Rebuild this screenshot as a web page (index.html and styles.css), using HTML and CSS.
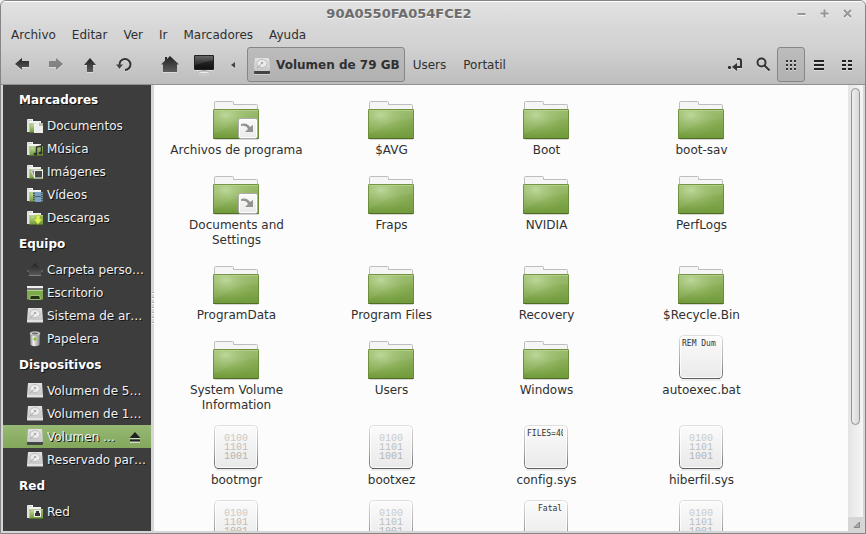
FILE: index.html
```html
<!DOCTYPE html>
<html lang="es">
<head>
<meta charset="utf-8">
<title>90A0550FA054FCE2</title>
<link rel="stylesheet" href="styles.css">
</head>
<body>
<svg class="defs" aria-hidden="true">
  <defs>
    <linearGradient id="dark" x1="0" y1="0" x2="0" y2="1"><stop offset="0" stop-color="#222"/><stop offset="1" stop-color="#5c5c5c"/></linearGradient>
    <linearGradient id="green" x1="0" y1="0" x2="0" y2="1"><stop offset="0" stop-color="#97b866"/><stop offset="1" stop-color="#709a3a"/></linearGradient>
    <radialGradient id="glow" cx=".28" cy=".2" r=".75"><stop offset="0" stop-color="#c2dba0" stop-opacity=".9"/><stop offset="1" stop-color="#8fb45c" stop-opacity="0"/></radialGradient>
    <linearGradient id="paper" x1="0" y1="0" x2="0" y2="1"><stop offset="0" stop-color="#fbfbfb"/><stop offset="1" stop-color="#e9e9e9"/></linearGradient>
    <linearGradient id="edge" x1="0" y1="0" x2="0" y2="1"><stop offset="0" stop-color="#dedede"/><stop offset=".6" stop-color="#a9a9a9"/><stop offset="1" stop-color="#666"/></linearGradient>
    <linearGradient id="metal" x1="0" y1="0" x2="0" y2="1"><stop offset="0" stop-color="#e2e2e2"/><stop offset="1" stop-color="#c4c4c4"/></linearGradient>
    <linearGradient id="bin" x1="0" y1="0" x2="1" y2="0"><stop offset="0" stop-color="#888"/><stop offset=".35" stop-color="#eee"/><stop offset="1" stop-color="#888"/></linearGradient>
    <linearGradient id="screen" x1="0" y1="0" x2="0" y2="1"><stop offset="0" stop-color="#555"/><stop offset=".5" stop-color="#222"/><stop offset="1" stop-color="#111"/></linearGradient>
  </defs>
  <symbol id="folder" viewBox="0 0 48 48">
    <path d="M3 45.5H46" stroke="#000" stroke-opacity=".15"/>
    <path d="M2.500 16V8.500Q2.500 7.500 3.500 7.500H20.500Q21.500 7.500 21.500 8.500V10.500H44.500Q45.500 10.500 45.500 11.500V16" fill="#f5f5f5" stroke="#bdbdbd"/>
    <rect x="1" y="15" width="46" height="30" rx="1" fill="url(#green)"/>
    <path d="M2 16H46V25Q22 26 9 37L2 40Z" fill="#fff" opacity=".07"/>
    <rect x="1" y="15" width="46" height="30" rx="1" fill="url(#glow)"/>
    <rect x="1.500" y="15.500" width="45" height="29" rx="1" fill="none" stroke="#638530" stroke-opacity=".75"/>
    <path d="M2 16.500H46" stroke="#bad492" stroke-opacity=".7"/>
    <path d="M1.500 44.500H46.500" stroke="#506c27"/>
  </symbol>
  <symbol id="link" viewBox="0 0 48 48">
    <use href="#folder"/>
    <rect x="26.500" y="24.500" width="19" height="20" rx="2" fill="url(#paper)" stroke="#aaa"/>
    <rect x="27.500" y="25.500" width="17" height="18" rx="1" fill="none" stroke="#fff"/>
    <path d="M29 30Q35 28 38 33L41 31V38H33L36 35Q34 31 29 32Z" fill="#929490"/>
  </symbol>
  <symbol id="sheet" viewBox="0 0 48 48">
    <path d="M4 46H44" stroke="#000" stroke-opacity=".12"/>
    <rect x="2.500" y="1.500" width="43" height="43" rx="4" fill="url(#paper)" stroke="url(#edge)"/>
    <path d="M5 44.500H43" stroke="#5e5e5e"/>
    <rect x="3.500" y="2.500" width="41" height="41" rx="3" fill="none" stroke="#fff" stroke-opacity=".8"/>
  </symbol>
  <symbol id="mini" viewBox="0 0 16 16">
    <path d="M0 14V2Q0 1 1 1H6V3H14V6H2V14Z" fill="#f2f2f2"/>
    <path d="M1 14V2.500H5" fill="none" stroke="#bbb" stroke-width=".6"/>
    <rect x="2" y="5" width="14" height="10" fill="url(#green)"/>
    <rect x="2" y="5" width="14" height="10" fill="url(#glow)"/>
    <path d="M2.500 15V5.500H16" fill="none" stroke="#bcd49c" stroke-width=".7"/>
    <path d="M2 14.500H16" stroke="#55752c"/>
  </symbol>
  <symbol id="docs" viewBox="0 0 16 16"><use href="#mini"/><path d="M7 4H12L16 8V15H7Z" fill="#eee"/><path d="M12 4V8H16Z" fill="#bbb"/></symbol>
  <symbol id="music" viewBox="0 0 16 16"><use href="#mini"/><path d="M9.500 13V6L14.500 5V12" fill="none" stroke="#333" stroke-width="1.500"/><ellipse cx="8.500" cy="13" rx="2" ry="1.600" fill="#333"/><ellipse cx="13.500" cy="12" rx="2" ry="1.600" fill="#333"/></symbol>
  <symbol id="images" viewBox="0 0 16 16"><use href="#mini"/><path d="M4.500 7L9 5V12L7 13Z" fill="#888" stroke="#ddd"/><rect x="7.500" y="6.500" width="8" height="7.500" fill="#454a45" stroke="#eee"/></symbol>
  <symbol id="videos" viewBox="0 0 16 16"><use href="#mini"/><rect x="6" y="5" width="10" height="10" fill="#4f5f6a"/><path d="M8 5H14V9H8ZM8 10H14V15H8Z" fill="#79a4c5"/><path d="M7 5V15M15 5V15" stroke="#bbb" stroke-dasharray="1 1"/></symbol>
  <symbol id="downloads" viewBox="0 0 16 16"><use href="#mini"/><path d="M9 5H13V9H15.500L11 14.500L6.500 9H9Z" fill="#dff052" stroke="#8fae25" stroke-width=".5"/></symbol>
  <symbol id="net" viewBox="0 0 16 16"><use href="#mini"/><rect x="7" y="6" width="7" height="7" fill="#eee"/><path d="M8 12V9H9V7H12V9H13V12Z" fill="#333"/></symbol>
  <symbol id="homedark" viewBox="0 0 16 16"><path d="M8 1L16 9H14V14H2V9H0Z" fill="url(#dark)"/><path d="M2 13.500H14M0 9H2M14 9H16" fill="none" stroke="#888" stroke-width=".8"/></symbol>
  <symbol id="desk" viewBox="0 0 16 16"><rect y="1" width="16" height="2" fill="#eee"/><rect y="3" width="16" height="2" fill="#777"/><path d="M0 5H16V14.500H0Z" fill="#7eaa4b"/><path d="M0 5.500H16" stroke="#b2d38c"/><path d="M2.500 14.500L3.500 10.500H12.500L13.500 14.500Z" fill="#243414" stroke="#b2d38c" stroke-width=".8"/></symbol>
  <symbol id="disk" viewBox="0 0 16 16"><path d="M1 0H15L16 12V15H0V12Z" fill="url(#metal)"/><path d="M0 12H16V14H0Z" fill="#e2e2e2"/><path d="M0 14.500H16" stroke="#8c8c8c"/><ellipse cx="8" cy="5.500" rx="5" ry="4" fill="#ececec" stroke="#b5b5b5" stroke-width=".8"/><circle cx="8" cy="5" r="1.200" fill="#aaa"/><path d="M3 10L7 6.500" stroke="#999" stroke-width=".8"/></symbol>
  <symbol id="diskmount" viewBox="0 0 16 16"><use href="#disk"/><rect y="12.500" width="16" height="3.500" rx="1" fill="#444"/><path d="M1 12.500H15" stroke="#ccc"/></symbol>
  <symbol id="trash" viewBox="0 0 16 16"><path d="M3 2H13L12.500 14Q8 16.500 3.500 14Z" fill="url(#bin)"/><ellipse cx="8" cy="2.500" rx="5" ry="2" fill="#ddd" stroke="#999" stroke-width=".7"/><ellipse cx="8" cy="2.500" rx="3.200" ry=".9" fill="#666"/><path d="M6 8.500L8 5.500L10 8.500L9 9.500H7Z" fill="#89c33b"/></symbol>
</svg>
<div class="window">
  <header class="head">
    <div class="titlebar">
      <h1>90A0550FA054FCE2</h1>
      <div class="wm">
        <button aria-label="Minimizar"><svg width="9" height="9"><path d="M0.500 5H8.500" stroke="#969696" stroke-width="2"/></svg></button>
        <button aria-label="Maximizar"><svg width="9" height="9"><path d="M.500 4.500H8.500M4.500 .500V8.500" stroke="#969696" stroke-width="2"/></svg></button>
        <button aria-label="Cerrar"><svg width="9" height="9"><path d="M1 1L8 8M8 1L1 8" stroke="#969696" stroke-width="2"/></svg></button>
      </div>
    </div>
    <nav class="menu">
      <button>Archivo</button><button>Editar</button><button>Ver</button><button>Ir</button><button>Marcadores</button><button>Ayuda</button>
    </nav>
    <div class="toolbar">
      <div class="group">
        <button class="nav" aria-label="Atrás"><svg width="16" height="14"><path d="M1 6L8 0V3H15V9H8V12Z" fill="url(#dark)"/></svg></button>
        <button class="nav dim" aria-label="Adelante"><svg width="16" height="14"><path d="M15 6L8 0V3H1V9H8V12Z" fill="#777"/></svg></button>
        <button class="nav" aria-label="Subir"><svg width="14" height="16"><path d="M7 1L13 8H10V15H4V8H1Z" fill="url(#dark)"/></svg></button>
        <button class="nav" aria-label="Recargar"><svg width="18" height="16"><path d="M4.500 8A5.500 5.500 0 1 1 10 13" fill="none" stroke="#333" stroke-width="2"/><path d="M1 7.500H8L4.500 12Z" fill="#444"/></svg></button>
      </div>
      <div class="group">
        <button class="nav" aria-label="Carpeta personal"><svg width="18" height="18"><path d="M9 0L18 8.500H16V16H2V8.500H0L4 4.500V1H6V3Z" fill="url(#dark)"/></svg></button>
        <button class="nav" aria-label="Equipo"><svg width="22" height="20"><path d="M9 14H13V17H9Z" fill="#aaa"/><ellipse cx="11" cy="17.500" rx="5.500" ry="1.500" fill="#eee" stroke="#999" stroke-width=".7"/><rect x="1" y="0" width="20" height="15" rx="1" fill="#222"/><rect x="2" y="1" width="18" height="13" fill="url(#screen)"/><path d="M2 1H20V5L2 10Z" fill="#fff" opacity=".1"/></svg></button>
        <button class="tiny" aria-label="Anterior"><svg width="4" height="6"><path d="M4 0V6L0 3Z" fill="#444"/></svg></button>
      </div>
      <div class="path">
        <button class="crumb current"><svg width="16" height="16"><use href="#diskmount"/></svg><span>Volumen de 79 GB</span></button>
        <button class="crumb">Users</button><button class="crumb">Portatil</button>
      </div>
      <div class="views">
        <button aria-label="Ubicación"><svg width="14" height="14"><path d="M9 1H11Q13 1 13 3V9H8" fill="none" stroke="#333" stroke-width="2"/><path d="M4 9L9 5V13Z" fill="#333"/><rect x="0" y="8" width="3" height="3" rx="1" fill="#333"/></svg></button>
        <button aria-label="Buscar"><svg width="16" height="16"><circle cx="6.500" cy="5.500" r="4" fill="none" stroke="#333" stroke-width="2"/><path d="M9.500 8.500L14.500 13.500" stroke="#333" stroke-width="2"/></svg></button>
        <button class="on" aria-label="Iconos"><svg width="10" height="10"><path d="M0 1H10M0 5H10M0 9H10" stroke="#333" stroke-width="2" stroke-dasharray="2"/></svg></button>
        <button aria-label="Lista"><svg width="10" height="10"><path d="M0 1H10M0 5H10M0 9H10" stroke="#222" stroke-width="2"/></svg></button>
        <button aria-label="Compacta"><svg width="10" height="10"><path d="M0 1H10M0 5H10M0 9H10" stroke="#222" stroke-width="2" stroke-dasharray="4 2"/></svg></button>
      </div>
    </div>
  </header>
  <div class="body">
    <aside class="side">
      <h2>Marcadores</h2>
      <a href="#"><svg><use href="#docs"/></svg><span>Documentos</span></a>
      <a href="#"><svg><use href="#music"/></svg><span>Música</span></a>
      <a href="#"><svg><use href="#images"/></svg><span>Imágenes</span></a>
      <a href="#"><svg><use href="#videos"/></svg><span>Vídeos</span></a>
      <a href="#"><svg><use href="#downloads"/></svg><span>Descargas</span></a>
      <h2>Equipo</h2>
      <a href="#"><svg><use href="#homedark"/></svg><span>Carpeta perso…</span></a>
      <a href="#"><svg><use href="#desk"/></svg><span>Escritorio</span></a>
      <a href="#"><svg><use href="#disk"/></svg><span>Sistema de ar…</span></a>
      <a href="#"><svg><use href="#trash"/></svg><span>Papelera</span></a>
      <h2>Dispositivos</h2>
      <a href="#"><svg><use href="#disk"/></svg><span>Volumen de 5…</span></a>
      <a href="#"><svg><use href="#disk"/></svg><span>Volumen de 1…</span></a>
      <a href="#" class="selected"><svg><use href="#diskmount"/></svg><span>Volumen …</span><svg class="eject" viewBox="0 0 12 12"><path d="M6 2L12 8H0ZM1 10H11V12H1Z" fill="#eee" opacity=".7"/><path d="M6 1L11.500 7H.500ZM1 8.500H11V10.500H1Z" fill="#222"/></svg></a>
      <a href="#"><svg><use href="#disk"/></svg><span>Reservado par…</span></a>
      <h2>Red</h2>
      <a href="#"><svg><use href="#net"/></svg><span>Red</span></a>
    </aside>
    <div class="split"><i class="dots"></i></div>
    <main class="files">
      <figure><svg><use href="#link"/></svg><figcaption>Archivos de programa</figcaption></figure>
      <figure><svg><use href="#folder"/></svg><figcaption>$AVG</figcaption></figure>
      <figure><svg><use href="#folder"/></svg><figcaption>Boot</figcaption></figure>
      <figure><svg><use href="#folder"/></svg><figcaption>boot-sav</figcaption></figure>
      <figure><svg><use href="#link"/></svg><figcaption>Documents and Settings</figcaption></figure>
      <figure><svg><use href="#folder"/></svg><figcaption>Fraps</figcaption></figure>
      <figure><svg><use href="#folder"/></svg><figcaption>NVIDIA</figcaption></figure>
      <figure><svg><use href="#folder"/></svg><figcaption>PerfLogs</figcaption></figure>
      <figure><svg><use href="#folder"/></svg><figcaption>ProgramData</figcaption></figure>
      <figure><svg><use href="#folder"/></svg><figcaption>Program Files</figcaption></figure>
      <figure><svg><use href="#folder"/></svg><figcaption>Recovery</figcaption></figure>
      <figure><svg><use href="#folder"/></svg><figcaption>$Recycle.Bin</figcaption></figure>
      <figure><svg><use href="#folder"/></svg><figcaption>System Volume Information</figcaption></figure>
      <figure><svg><use href="#folder"/></svg><figcaption>Users</figcaption></figure>
      <figure><svg><use href="#folder"/></svg><figcaption>Windows</figcaption></figure>
      <figure><svg viewBox="0 0 48 48"><use href="#sheet"/><svg x="5" y="4" width="36" height="38"><text class="preview" x="0" y="8">REM Dum</text></svg></svg><figcaption>autoexec.bat</figcaption></figure>
      <figure><svg class="bits"><use href="#sheet"/><text x="12" y="17">0100</text><text x="12" y="26">1101</text><text x="12" y="35">1001</text></svg><figcaption>bootmgr</figcaption></figure>
      <figure><svg class="bits"><use href="#sheet"/><text x="12" y="17">0100</text><text x="12" y="26">1101</text><text x="12" y="35">1001</text></svg><figcaption>bootxez</figcaption></figure>
      <figure><svg viewBox="0 0 48 48"><use href="#sheet"/><svg x="5" y="4" width="36" height="38"><text class="preview" x="0" y="8">FILES=40</text></svg></svg><figcaption>config.sys</figcaption></figure>
      <figure><svg class="bits"><use href="#sheet"/><text x="12" y="17">0100</text><text x="12" y="26">1101</text><text x="12" y="35">1001</text></svg><figcaption>hiberfil.sys</figcaption></figure>
      <figure><svg class="bits"><use href="#sheet"/><text x="12" y="17">0100</text><text x="12" y="26">1101</text><text x="12" y="35">1001</text></svg></figure>
      <figure><svg class="bits"><use href="#sheet"/><text x="12" y="17">0100</text><text x="12" y="26">1101</text><text x="12" y="35">1001</text></svg></figure>
      <figure><svg viewBox="0 0 48 48"><use href="#sheet"/><text class="preview" x="16" y="12">Fatal</text></svg></figure>
      <figure><svg class="bits"><use href="#sheet"/><text x="12" y="17">0100</text><text x="12" y="26">1101</text><text x="12" y="35">1001</text></svg></figure>
    </main>
    <div class="scroll">
      <div class="track"><div class="thumb"></div></div>
      <svg class="grip" width="15" height="14"><path d="M6 10.500H11.500V5Z" fill="#aaa" stroke="#888"/></svg>
    </div>
  </div>
</div>
</body>
</html>
```
FILE: styles.css
```css
* { box-sizing: border-box; }
html { background: #f0f0f0; }
body {
  margin: 0;
  height: 100vh;
  font: 12px/15px "DejaVu Sans", sans-serif;
  color: #303030;
}
h1, h2, figure { margin: 0; }
button {
  border: 0;
  padding: 0;
  background: none;
  font: inherit;
  color: inherit;
}
svg { display: block; flex: none; }
.defs { position: absolute; width: 0; height: 0; }

.window {
  height: 100%;
  display: flex;
  flex-direction: column;
  border: 1px solid #858585;
  border-radius: 6px 6px 0 0;
  background: #d6d6d6;
  overflow: hidden;
}
.head {
  height: 84px;
  flex: none;
  display: flex;
  flex-direction: column;
  border-top: 1px solid #fff;
  border-bottom: 1px solid #929292;
  background: linear-gradient(#e2e2e2, #d6d6d6 35%, #d2d2d2 55%, #bdbdbd);
}
.titlebar {
  height: 23px;
  display: grid;
  grid-template-columns: 1fr auto 1fr;
  align-items: center;
  padding: 0 13px;
}
.titlebar h1 {
  grid-column: 2;
  padding-right: 68px;
  font-size: 13px;
  line-height: 15px;
  color: #6c6c6c;
  text-shadow: 0 1px #f4f4f4;
}
.wm { display: flex; gap: 14px; justify-content: flex-end; }
.wm svg { filter: drop-shadow(0 1px #f4f4f4); }

.menu { height: 20px; display: flex; gap: 16px; padding: 0 10px; }
.toolbar { height: 36px; margin-top: 2px; display: flex; padding: 0 4px; }
.group { display: flex; margin-right: 12px; }
.group + .group { margin-right: 2px; }
.toolbar button { height: 35px; display: flex; align-items: center; justify-content: center; }
.toolbar .nav { width: 34px; }
.toolbar .dim { opacity: .85; }
.toolbar .tiny { width: 24px; }
.toolbar svg { filter: drop-shadow(0 1px rgba(255,255,255,.4)); }
.path { display: flex; flex: 1; }
.toolbar .crumb { padding: 2px 9px 0; }
.toolbar .current {
  gap: 6px;
  padding: 2px 4px 0 6px;
  font-weight: bold;
}
.toolbar .current, .toolbar .on {
  border: 1px solid #868686;
  border-radius: 3px;
  background: linear-gradient(#bcbcbc, #b1b1b1);
}
.crumb + .crumb { margin-left: -1px; }
.views { display: flex; }
.toolbar .views button { width: 28px; }

.body {
  flex: 1;
  min-height: 0;
  display: flex;
  padding: 0 2px 2px;
}
.side { width: 148px; flex: none; background: #3d3d3d; overflow: hidden; }
.side h2 {
  padding: 1px 0 0 16px;
  font-size: 12px;
  line-height: 28px;
  color: #fff;
  text-shadow: 1px 1px #111;
}
.side a {
  height: 23px;
  display: flex;
  align-items: center;
  gap: 4px;
  padding: 1px 10px 0 24px;
  color: #f0f0f0;
  text-decoration: none;
  white-space: nowrap;
  text-shadow: 1px 1px #111;
}
.side a svg { width: 16px; height: 16px; }
.side .selected { background: linear-gradient(#97b974, #83a75c); }
.side .selected .eject { width: 12px; height: 12px; margin-left: auto; }
.split {
  width: 3px;
  flex: none;
  display: flex;
  align-items: center;
  background: #d6d6d6;
}
.dots {
  width: 3px;
  height: 32px;
  padding-left: 1px;
  background: repeating-linear-gradient(#a9a9a9 0 1px, #fff 1px 2px, #d6d6d6 2px 5px) content-box;
}
.files {
  flex: 1;
  min-width: 0;
  display: grid;
  grid-template-columns: repeat(auto-fill, 155px);
  align-content: start;
  row-gap: 11px;
  padding: 9px 0 0 5px;
  background: #fcfcfc;
  overflow: hidden;
}
.files figure { display: flex; flex-direction: column; align-items: center; }
.files figure > svg { width: 48px; height: 48px; margin: 0 1px 1px 0; }
.files figcaption { max-width: 140px; text-align: center; }
.bits { font: 10px "Liberation Mono", monospace; fill: #b5b5b5; }
.bits text:nth-of-type(1) { fill: #cbcbcb; }
.bits text:nth-of-type(2) { fill: #bebebe; }
.preview { font: 8px "DejaVu Sans Mono", monospace; fill: #333; }

.scroll { width: 15px; flex: none; display: flex; flex-direction: column; }
.track {
  flex: 1;
  padding: 3px;
  background: linear-gradient(90deg, #e4e4e4, #f6f6f6);
}
.thumb {
  width: 9px;
  height: 79%;
  border: 1px solid #929292;
  border-radius: 5px;
  background: linear-gradient(90deg, #eee, #d8d8d8);
}
```
